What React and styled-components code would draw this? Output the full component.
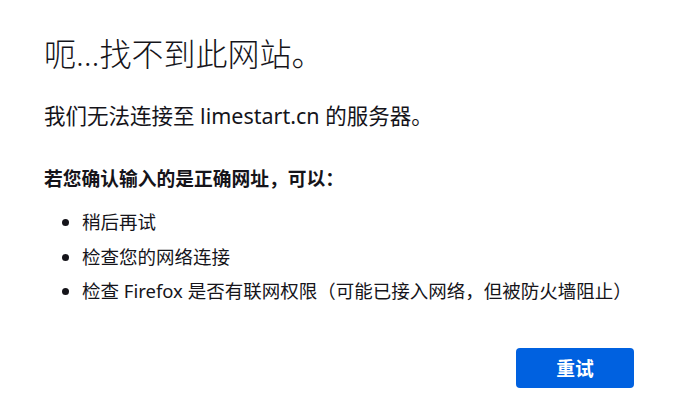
import styled, { createGlobalStyle } from "styled-components";

const GlobalStyle = createGlobalStyle`
  html, body {
    margin: 0;
    padding: 0;
    background: #ffffff;
  }
  body {
    font-family: "Noto Sans", "Noto Sans CJK SC", sans-serif;
    color: #15141a;
  }
`;

const Page = styled.main`
  width: 590px;
  padding: 36px 0 0 44px;
`;

const Title = styled.h1`
  margin: 0;
  font-size: 32px;
  line-height: 36px;
  font-weight: 300;
`;

const ShortDesc = styled.p`
  margin: 29px 0 0;
  font-size: 21.5px;
  line-height: 30px;
`;

const Heading = styled.p`
  margin: 34px 0 0;
  font-size: 18.75px;
  line-height: 28px;
  font-weight: 700;
`;

const Suggestions = styled.ul`
  margin: 12px 0 0;
  padding-left: 38px;
  list-style: disc;
`;

const Suggestion = styled.li`
  font-size: 18.5px;
  line-height: 34.5px;
`;

const ButtonRow = styled.div`
  display: flex;
  justify-content: flex-end;
  margin-top: 39px;
`;

const RetryButton = styled.button`
  min-width: 118px;
  height: 40px;
  border: 0;
  border-radius: 4px;
  background: #0061e0;
  color: #fff;
  font-family: inherit;
  font-size: 18.75px;
  font-weight: 700;
  cursor: pointer;
  &:hover {
    background: #0250bb;
  }
`;

export default function App() {
  const tips = [
    "稍后再试",
    "检查您的网络连接",
    "检查 Firefox 是否有联网权限（可能已接入网络，但被防火墙阻止）",
  ];

  return (
    <>
      <GlobalStyle />
      <Page>
        <Title>呃…找不到此网站。</Title>
        <ShortDesc>我们无法连接至 limestart.cn 的服务器。</ShortDesc>
        <Heading>若您确认输入的是正确网址，可以：</Heading>
        <Suggestions>
          {tips.map((tip) => (
            <Suggestion key={tip}>{tip}</Suggestion>
          ))}
        </Suggestions>
        <ButtonRow>
          <RetryButton type="button">重试</RetryButton>
        </ButtonRow>
      </Page>
    </>
  );
}
